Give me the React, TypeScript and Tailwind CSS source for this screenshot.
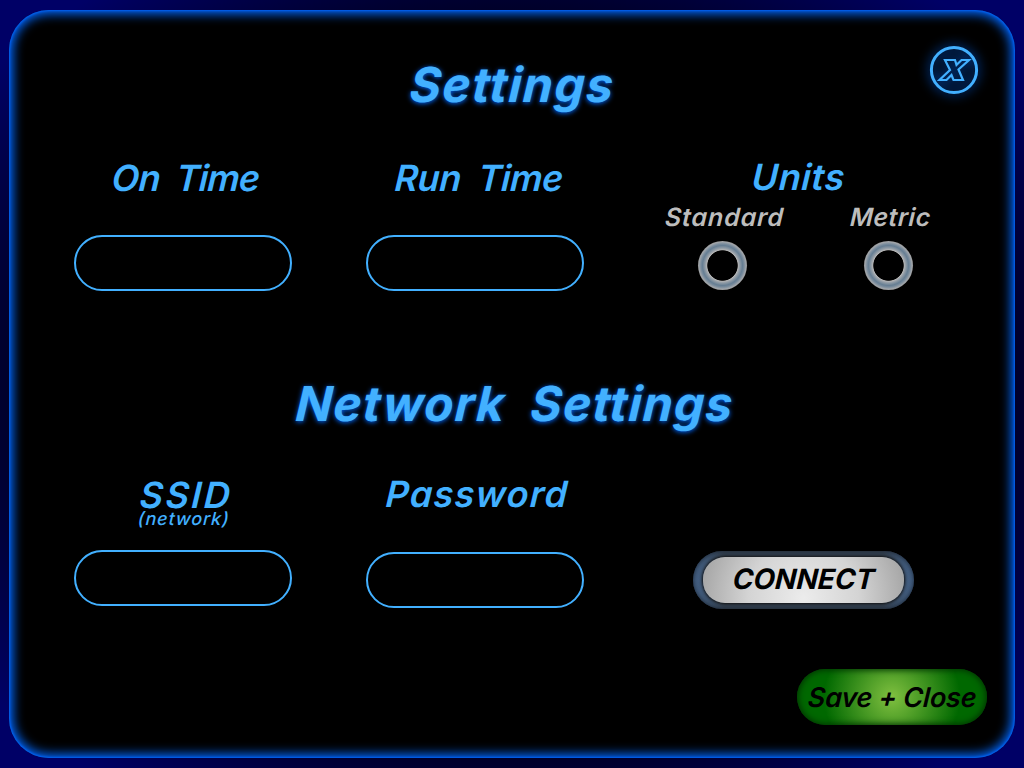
import React from "react";

const font = "font-['Inter','Liberation_Sans',sans-serif] italic whitespace-pre leading-none";

function Text({ className, children }: { className: string; children: string }) {
  return <span className={`${font} block w-max -skew-x-4 ${className}`}>{children}</span>;
}

function Field({ label }: { label: string }) {
  return (
    <input
      aria-label={label}
      className="block h-[56px] w-[218px] rounded-[28px] border-2 border-[#42b0ff] bg-black px-6 text-[#42b0ff] outline-none"
    />
  );
}

function Radio({ label }: { label: string }) {
  return (
    <button
      aria-label={label}
      className="block size-[49px] rounded-full bg-[radial-gradient(circle_at_center,#000_0_14.800px,#b5b5b5_15.600px,#8e9aa5_17.500px,#667e93_20px,#788b9c_21.500px,#a0a5aa_23.500px,#999_24.500px)]"
    />
  );
}

export default function App() {
  return (
    <main className="h-[768px] w-[1024px] overflow-hidden bg-[radial-gradient(ellipse_at_center,#000008_0%,#000018_62%,#000066_92%)] pt-[10px] pl-[9px]">
      <section className="h-[748px] w-[1006px] rounded-[40px] bg-black shadow-[inset_0_0_2px_1px_#0060f0,inset_0_0_11px_4px_#0068ff]">
        <header className="flex h-[143px] pt-[35px]">
          <h1 className="ml-[401px] pt-[16px]">
            <Text className="text-[48px] font-bold tracking-[1.4px] text-[#42b0ff] [text-shadow:0_1px_5px_#0068ff]">Settings</Text>
          </h1>
          <button aria-label="Close" className="ml-auto mr-[36px] block size-[50px]">
            <svg viewBox="0 0 50 50" className="size-[50px] overflow-visible [filter:drop-shadow(0_0_6px_#0068ff)]" fill="none" stroke="#42b0ff">
              <circle cx="25" cy="25" r="22.6" strokeWidth="3" />
              <path d="M16 15H26l1.500 5 5-5H40L29.500 24.500 34 35H24.500l-2-5-5 5H10.500L21 25z" strokeWidth="2.2" />
            </svg>
          </button>
        </header>
        <div className="flex h-[209px] pl-[65px]">
          <div className="w-[292px]">
            <h2 className="h-[82px] pl-[38px] pt-[7px]"><Text className="text-[36px] font-semibold tracking-[-0.9px] text-[#42b0ff]">On  Time</Text></h2>
            <Field label="On Time" />
          </div>
          <div className="w-[299px]">
            <h2 className="h-[82px] pl-[29px] pt-[7px]"><Text className="text-[36px] font-semibold tracking-[-0.5px] text-[#42b0ff]">Run  Time</Text></h2>
            <Field label="Run Time" />
          </div>
          <div>
            <h2 className="h-[52px] pl-[87px] pt-[6px]"><Text className="text-[36px] font-semibold tracking-[0.6px] text-[#42b0ff]">Units</Text></h2>
            <div className="flex">
              <div className="w-[185px]">
                <div className="h-[36px]"><Text className="text-[25px] font-semibold tracking-[0.9px] text-[#bdbdbd]">Standard</Text></div>
                <div className="pl-[33px]"><Radio label="Standard" /></div>
              </div>
              <div>
                <div className="h-[36px]"><Text className="text-[25px] font-semibold tracking-[0.5px] text-[#bdbdbd]">Metric</Text></div>
                <div className="pl-[14px]"><Radio label="Metric" /></div>
              </div>
            </div>
          </div>
        </div>
        <h1 className="h-[108px] pl-[287px] pt-[18px]">
          <Text className="text-[48px] font-bold tracking-[1.2px] text-[#42b0ff] [text-shadow:0_1px_5px_#0068ff]">Network  Settings</Text>
        </h1>
        <div className="flex h-[199px] pl-[65px]">
          <div className="w-[292px]">
            <h2 className="h-[80px] pl-[64px] pt-[7px]">
              <Text className="ml-[2px] h-[33px] text-[36px] font-semibold tracking-[2.5px] text-[#42b0ff]">SSID</Text>
              <Text className="text-[18px] font-medium tracking-[0.85px] text-[#42b0ff]">(network)</Text>
            </h2>
            <Field label="SSID" />
          </div>
          <div className="w-[327px]">
            <h2 className="h-[82px] pl-[20px] pt-[6px]"><Text className="text-[36px] font-semibold tracking-[1.25px] text-[#42b0ff]">Password</Text></h2>
            <Field label="Password" />
          </div>
          <div className="pt-[81px]">
            <button className="flex h-[58px] w-[221px] items-center justify-center rounded-[29px] bg-[linear-gradient(90deg,#46648a,#344150_14%,#344150_86%,#46648a)] shadow-[inset_0_0_5px_#18212d]">
              <span className="flex h-[46px] w-[201px] items-center justify-center rounded-[22px] bg-[radial-gradient(circle_at_50%_90%,#ececec,#d4d4d4_55px,#a5a5a5_105px)] pb-[2px] shadow-[0_0_3px_1px_#111]">
                <Text className="text-[28px] font-bold text-black">CONNECT</Text>
              </span>
            </button>
          </div>
        </div>
        <div className="flex pl-[788px]">
          <button className="flex h-[56px] w-[190px] items-center justify-center rounded-[28px] bg-[radial-gradient(circle_at_center,#80c040,#006800_68px)] shadow-[inset_0_0_6px_1px_#003000]">
            <Text className="text-[27px] font-semibold tracking-[-0.2px] text-black">Save + Close</Text>
          </button>
        </div>
      </section>
    </main>
  );
}
